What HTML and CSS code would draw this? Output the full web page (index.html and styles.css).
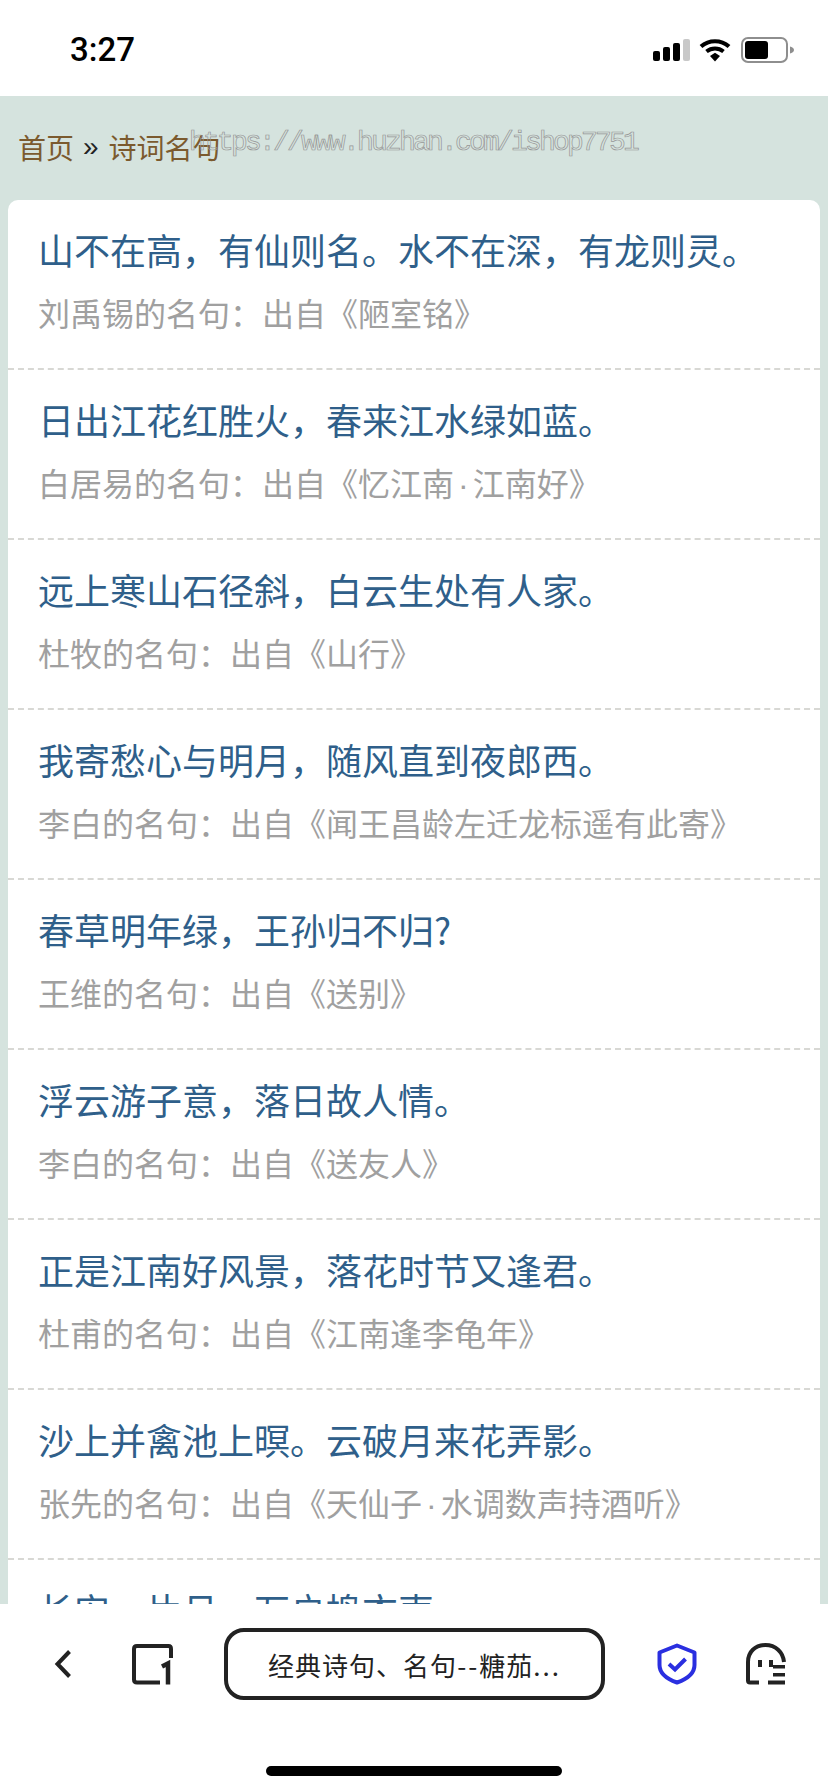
FILE: index.html
```html
<!DOCTYPE html>
<html lang="zh-CN">
<head>
<meta charset="utf-8">
<title>诗词名句</title>
<link rel="stylesheet" href="styles.css">
</head>
<body>
<div class="page">
  <header class="status">
    <span class="time">3:27</span>
    <div class="status-icons">
      <svg class="sig" width="37" height="22" viewBox="0 0 37 22"><rect x="0" y="12" width="7" height="10" rx="2"/><rect x="10" y="8" width="7" height="14" rx="2"/><rect x="20" y="4" width="7" height="18" rx="2"/><rect x="30" y="0" width="7" height="22" rx="2" fill="#c8c8c8"/></svg>
      <svg class="wifi" width="32" height="24" viewBox="0 0 32 24"><path d="M2 8.5C10 1.5 22 1.500 30 8.500" fill="none" stroke="#000" stroke-width="4.200"/><path d="M7.500 13.500C12.500 9.500 19.500 9.500 24.500 13.500" fill="none" stroke="#000" stroke-width="4"/><path d="M11 18L16 14.800L21 18L16 23.500Z"/></svg>
      <svg class="bat" width="54" height="26" viewBox="0 0 54 26"><rect x="1" y="1" width="45" height="24" rx="6" fill="none" stroke="#8e8e8e" stroke-width="2"/><rect x="4" y="4" width="23" height="18" rx="3"/><path d="M49 9.500C51 10 53 11 53 13S51 16 49 16.500Z" fill="#8e8e8e"/></svg>
    </div>
  </header>
  <main class="content">
    <nav class="crumb"><a class="crumb-link">首页</a><span class="crumb-sep">»</span><a class="crumb-link">诗词名句</a><span class="mark">https://www.huzhan.com/ishop7751</span></nav>
    <section class="card">
      <article class="row"><h2 class="quote">山不在高&#xFF0C;有仙则名。水不在深&#xFF0C;有龙则灵。</h2><p class="src">刘禹锡的名句&#xFF1A;出自《陋室铭》</p></article>
      <article class="row"><h2 class="quote">日出江花红胜火&#xFF0C;春来江水绿如蓝。</h2><p class="src">白居易的名句&#xFF1A;出自《忆江南<span class="dot">·</span>江南好》</p></article>
      <article class="row"><h2 class="quote">远上寒山石径斜&#xFF0C;白云生处有人家。</h2><p class="src">杜牧的名句&#xFF1A;出自《山行》</p></article>
      <article class="row"><h2 class="quote">我寄愁心与明月&#xFF0C;随风直到夜郎西。</h2><p class="src">李白的名句&#xFF1A;出自《闻王昌龄左迁龙标遥有此寄》</p></article>
      <article class="row"><h2 class="quote">春草明年绿&#xFF0C;王孙归不归?</h2><p class="src">王维的名句&#xFF1A;出自《送别》</p></article>
      <article class="row"><h2 class="quote">浮云游子意&#xFF0C;落日故人情。</h2><p class="src">李白的名句&#xFF1A;出自《送友人》</p></article>
      <article class="row"><h2 class="quote">正是江南好风景&#xFF0C;落花时节又逢君。</h2><p class="src">杜甫的名句&#xFF1A;出自《江南逢李龟年》</p></article>
      <article class="row"><h2 class="quote">沙上并禽池上暝。云破月来花弄影。</h2><p class="src">张先的名句&#xFF1A;出自《天仙子<span class="dot">·</span>水调数声持酒听》</p></article>
      <article class="row"><h2 class="quote">长安一片月&#xFF0C;万户捣衣声。</h2></article>
    </section>
  </main>
  <footer class="bar">
    <div class="tools">
      <svg class="ic-back" width="18" height="30" viewBox="0 0 18 30"><path d="M15.500 2.500L3.500 15L15.500 27.500" fill="none" stroke="#222" stroke-width="4"/></svg>
      <svg class="ic-tabs" width="41" height="41" viewBox="0 0 41 41"><path d="M28 38.500H5Q2 38.500 2 35.500V5Q2 2 5 2H36.500Q39 2 39 5V14" fill="none" stroke="#222" stroke-width="4"/><path d="M30 22.500L36 19.500V40.500" fill="none" stroke="#222" stroke-width="4.500"/></svg>
      <div class="pill"><span>经典诗句、名句<span class="dash">--</span>糖茄<span class="dash">...</span></span></div>
      <svg class="ic-shield" width="42" height="42" viewBox="0 0 42 42"><path d="M21 2.500L38.500 9.500V22C38.500 30 31 36 21 39.500C11 36 3.500 30 3.500 22V9.500Z" fill="none" stroke="#2a2fe0" stroke-width="4" stroke-linejoin="round"/><path d="M13 21L19 26.500L29.500 16" fill="none" stroke="#2a2fe0" stroke-width="4"/></svg>
      <svg class="ic-ghost" width="40" height="42" viewBox="0 0 40 42"><path d="M13 39.500H4Q2 39.500 2 37.500V19C2 9 9 2 19.500 2C29.500 2 37 9 38 19" fill="none" stroke="#222" stroke-width="4"/><rect x="12" y="17" width="4" height="7" fill="#222"/><rect x="23" y="17" width="4" height="7" fill="#222"/><rect x="27" y="22" width="12" height="3.500" fill="#222"/><rect x="27" y="30" width="12" height="3.500" fill="#222"/><rect x="22" y="37.500" width="17" height="4" fill="#222"/></svg>
    </div>
    <div class="home"></div>
  </footer>
</div>
</body>
</html>
```

FILE: styles.css
```css
* { box-sizing: border-box; }
html, body { margin: 0; padding: 0; background: #fff; }
body { font-family: "Noto Sans CJK SC", "Liberation Sans", sans-serif; }
.page { width: 828px; height: 1792px; display: flex; flex-direction: column; overflow: hidden; }

.status { height: 96px; flex: none; background: #fff; display: flex; align-items: flex-start; justify-content: space-between; padding: 30px 33px 0 70px; }
.time { font-family: Roboto, "Liberation Sans", sans-serif; font-size: 33px; font-weight: 500; line-height: 40px; color: #000; }
.status-icons { display: flex; align-items: center; gap: 9px; padding-top: 7px; }
.bat { margin-left: 1px; }

.content { flex: 1; min-height: 0; overflow: hidden; background: #d5e3de; padding: 0 8px; }
.crumb { height: 104px; position: relative; display: flex; align-items: center; padding: 0 0 2px 10px; font-size: 28px; line-height: 40px; color: #222; margin: 0 -8px 0 0; }
.crumb-link { color: #7b5a2e; }
.crumb-sep { margin: 0 10px 0 9px; font-family: "Liberation Sans", sans-serif; font-size: 28px; }
.mark { position: absolute; left: 181px; top: 31px; font-family: "Liberation Mono", monospace; font-size: 28px; line-height: 32px; white-space: nowrap; letter-spacing: -2.8px; color: transparent; -webkit-text-stroke: 0.7px #969696; }

.card { background: #fff; border-radius: 10px 10px 0 0; }
.row { height: 170px; padding: 23px 30px 0; border-bottom: 2px dashed #d8d8d4; }
.quote { margin: 0; font-size: 36px; font-weight: 400; line-height: 52px; color: #2f5f8a; white-space: nowrap; }
.src { margin: 14px 0 0; font-size: 32px; font-weight: 400; line-height: 46px; color: #a0a0a0; white-space: nowrap; }
.dot { font-family: "Liberation Sans", sans-serif; margin: 0 4px; }

.bar { height: 188px; flex: none; background: #fff; display: flex; flex-direction: column; align-items: center; }
.tools { width: 100%; display: flex; align-items: center; padding: 24px 0 0 54px; }
.ic-tabs { margin-left: 60px; }
.pill { width: 381px; height: 72px; margin-left: 51px; border: 4px solid #222; border-radius: 20px; display: flex; align-items: center; justify-content: center; font-size: 26px; font-weight: 400; letter-spacing: 1px; color: #222; }
.dash { letter-spacing: 2px; }
.ic-shield { margin-left: 51px; }
.ic-ghost { margin-left: 48px; }
.home { width: 296px; height: 10px; margin-top: 66px; background: #000; border-radius: 5px; }
```
